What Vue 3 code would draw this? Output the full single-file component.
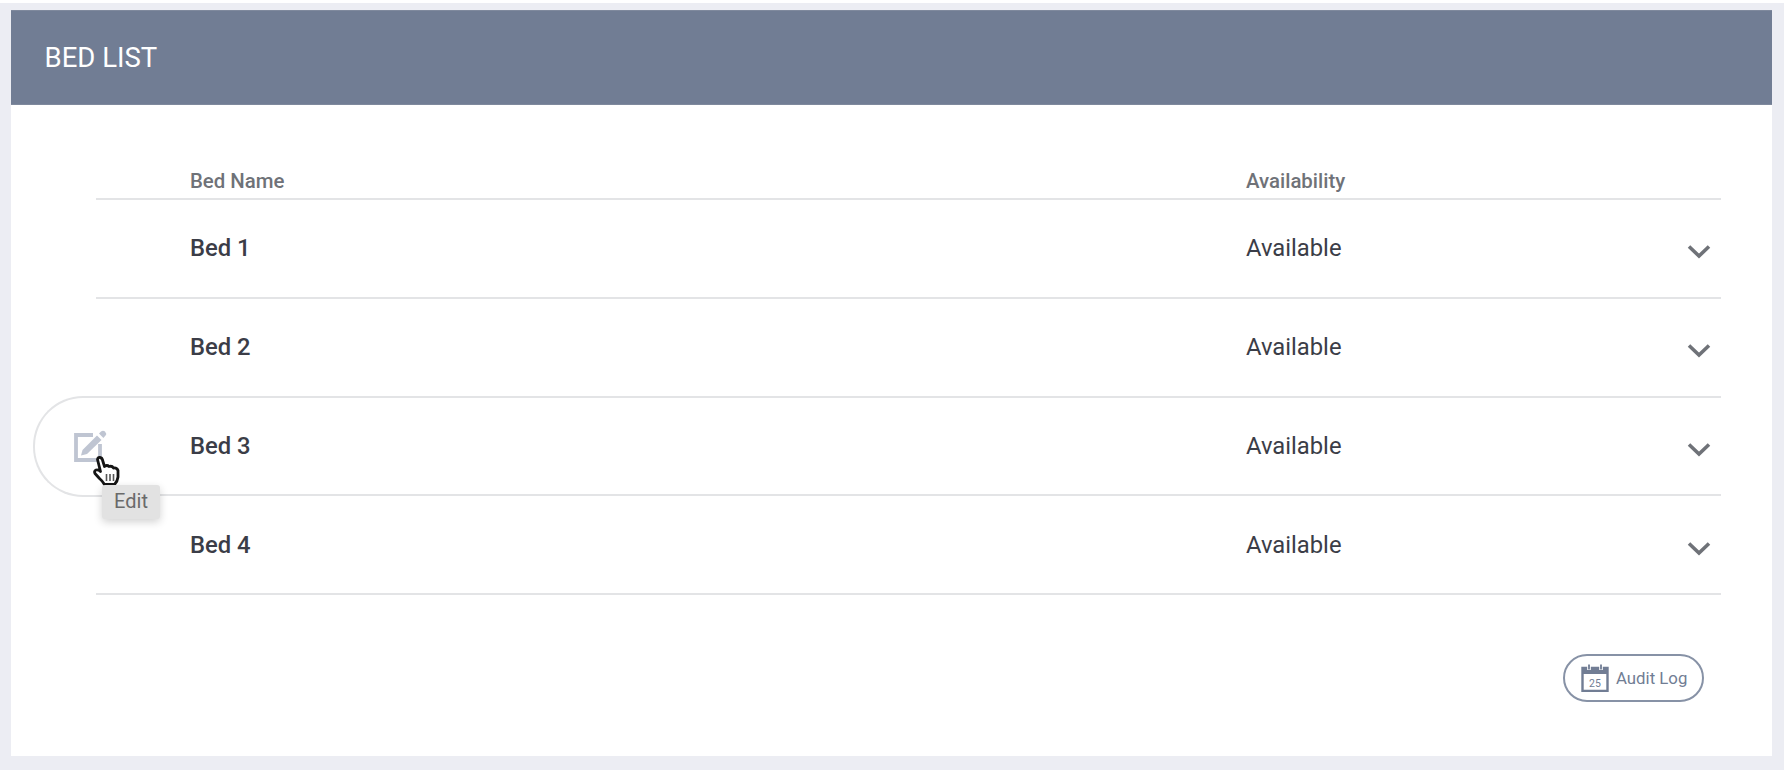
<script setup>
const beds = [
  { name: 'Bed 1', status: 'Available', active: false },
  { name: 'Bed 2', status: 'Available', active: false },
  { name: 'Bed 3', status: 'Available', active: true },
  { name: 'Bed 4', status: 'Available', active: false },
]
</script>

<template>
  <div class="page">
    <section class="panel">
      <header class="head">BED LIST</header>
      <div class="content">
        <div class="table">
          <div class="row-grid thead">
            <span>Bed Name</span>
            <span>Availability</span>
          </div>
          <div v-for="bed in beds" :key="bed.name" class="row-grid row" :class="{ active: bed.active }">
            <span class="name">{{ bed.name }}</span>
            <span class="status">{{ bed.status }}</span>
            <svg class="chev" viewBox="0 0 24 15" width="24" height="15">
              <path d="M2 2.5 L12 12 L22 2.5" fill="none" stroke="#6f7278" stroke-width="3.6" />
            </svg>
            <template v-if="bed.active">
              <div class="pill"></div>
              <svg class="edit" viewBox="0 0 36 36" width="36" height="36">
                <path d="M27 16 V32 H3 V7 H20" fill="none" stroke="#bfc5d2" stroke-width="3.8" />
                <path d="M8 27.5 L9.5 22 L24 7.5 L28.5 12 L14 26 Z" fill="#bfc5d2" />
                <path d="M26 5.5 L28 3.5 Q30 2 32 3.5 Q34 5.6 32.5 7.6 L30.4 10 Z" fill="#bfc5d2" />
              </svg>
              <svg class="hand" viewBox="0 0 27 30" width="27" height="30">
                <path d="M4.5 3.5 Q5 1.2 7 1.5 Q9 1.8 9.5 4 L11.5 10.5 Q14 8.5 16 10.5 Q19 9.5 20.5 12 Q24 11.5 25 14.5 L25 21 Q24.5 25.5 21.5 28.5 L11.5 28.5 Q9.5 25 6.5 22.5 L2 17.5 Q0.8 15 3 14 Q5.5 13.5 7.5 15.5 Z" fill="#fff" stroke="#151515" stroke-width="2.8" stroke-linejoin="round" />
                <path d="M13.5 18 V25 M17 18 V25 M20.5 18 V25" stroke="#555" stroke-width="1.6" fill="none" />
              </svg>
              <div class="tip">Edit</div>
            </template>
          </div>
        </div>
        <div class="foot">
          <button class="audit" type="button">
            <svg viewBox="0 0 28 28" width="28" height="28">
              <path d="M1.5 4 H26.5 V27 H1.5 Z" fill="none" stroke="#717d94" stroke-width="2.4" />
              <path d="M1.5 4 H26.5 V10 H1.5 Z" fill="#717d94" />
              <path d="M8 0.5 V6 M20 0.5 V6" stroke="#fff" stroke-width="3.6" />
              <path d="M8 0.5 V5.5 M20 0.5 V5.5" stroke="#717d94" stroke-width="1.8" />
              <text x="14" y="22.5" text-anchor="middle" class="day">25</text>
            </svg>
            <span>Audit Log</span>
          </button>
        </div>
      </div>
    </section>
  </div>
</template>

<style>
html, body { margin: 0; background: #fff; }
</style>

<style scoped>
.page {
  box-sizing: border-box;
  margin-top: 3px;
  height: 767px;
  padding: 7px 12px 14px 10.5px;
  background: #ecedf3;
  font-family: Roboto, "Liberation Sans", sans-serif;
}
.panel {
  height: 746px;
  background: #fff;
  display: flex;
  flex-direction: column;
}
.head {
  box-sizing: border-box;
  height: 95px;
  padding: 31px 34px 0;
  background: #717d94;
  border-top: 1px solid #7f899d;
  border-bottom: 1px solid #7f899d;
  color: #fff;
  font-size: 27.5px;
  line-height: 32px;
}
.content { flex: 1; padding: 60px 51px 0 85.5px; }
.table { width: 100%; }
.row-grid {
  display: grid;
  grid-template-columns: 1150px 1fr 40px;
  align-items: center;
  position: relative;
}
.row-grid > :first-child { padding-left: 94px; }
.thead {
  height: 33px;
  border-bottom: 2px solid #e3e4e6;
  color: #6f7278;
  font-size: 20.4px;
  font-weight: 500;
}
.thead > span { padding-bottom: 1px; }
.row {
  height: 98.75px;
  box-sizing: border-box;
  border-bottom: 2px solid #e3e4e6;
  color: #3b3d47;
  font-size: 23.8px;
}
.name { font-weight: 500; }
.chev { justify-self: start; margin-left: 6px; margin-top: 7px; }
.pill {
  position: absolute;
  left: -63px;
  top: -2px;
  width: 120px;
  height: 97px;
  border: 2px solid #e3e4e6;
  border-right: 0;
  border-radius: 50px 0 0 50px;
  background: #fff;
}
.edit { position: absolute; left: -23px; top: 30px; }
.hand { position: absolute; left: -3px; top: 58px; }
.tip {
  position: absolute;
  left: 6px;
  top: 87px;
  width: 58px;
  height: 34px;
  line-height: 33px;
  text-align: center;
  background: #e2e2e2;
  border-radius: 3px;
  box-shadow: 0 3px 8px rgba(0, 0, 0, 0.18);
  color: #6a6a6a;
  font-size: 20px;
}
.foot { display: flex; justify-content: flex-end; padding: 59px 17px 0 0; }
.audit {
  display: flex;
  align-items: center;
  gap: 7px;
  box-sizing: border-box;
  width: 141px;
  height: 48px;
  padding: 0 0 0 16px;
  background: #fff;
  border: 2px solid #8792a6;
  border-radius: 24px;
  color: #717d94;
  font-family: inherit;
  font-size: 16.8px;
}
.day { font-size: 10.5px; fill: #717d94; font-family: Roboto, sans-serif; }
</style>
